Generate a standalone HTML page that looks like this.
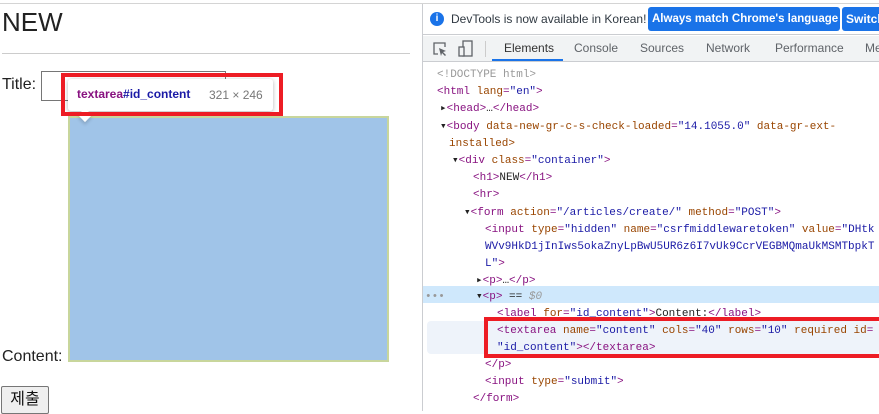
<!DOCTYPE html>
<html><head><meta charset="utf-8"><style>
*{margin:0;padding:0;box-sizing:border-box}
body{width:879px;height:411px;overflow:hidden;background:#fff;position:relative;font-family:"Liberation Sans","Noto Sans CJK KR",sans-serif}
.a{position:absolute;white-space:nowrap}
.m{font-family:"Liberation Mono","DejaVu Sans Mono",monospace;font-size:11px;line-height:17px;color:#881280;margin-top:2px}
.at{color:#994500}.v{color:#1a1aa6}.g{color:#999}.k{color:#222}
.tab{position:absolute;top:41px;font-size:12px;color:#5f6368}
</style></head><body>
<div class="a" style="left:0;top:3px;width:879px;height:1px;background:#d4d4d4"></div>
<div class="a" style="left:2px;top:7px;font-size:26px;color:#222;font-weight:300">NEW</div>
<div class="a" style="left:2px;top:53px;width:408px;height:1px;background:#ccc"></div>
<div class="a" style="left:2px;top:76px;font-size:16px;color:#222">Title:</div>
<div class="a" style="left:41px;top:71px;width:185px;height:30px;border:1px solid #767676"></div>
<div class="a" style="left:68px;top:116px;width:321px;height:246px;background:#c8d69c"></div>
<div class="a" style="left:70px;top:118px;width:317px;height:242px;background:#a0c4e8"></div>
<div class="a" style="left:2px;top:348px;font-size:16px;color:#222">Content:</div>
<div class="a" style="left:1px;top:386px;width:48px;height:28px;border:1px solid #767676;border-radius:2px;background:#efefef;font-size:16px;text-align:center;line-height:26px;color:#111">제출</div>
<div class="a" style="left:68px;top:79px;width:205px;height:32px;background:#fff;box-shadow:0 1px 4px rgba(0,0,0,.3);border-radius:3px"></div>
<div class="a" style="left:80px;top:110px;width:10px;height:10px;background:#fff;transform:rotate(45deg);box-shadow:2px 2px 3px rgba(0,0,0,.15)"></div>
<div class="a" style="left:77px;top:87px;font-size:12px;font-weight:bold"><span style="color:#881280">textarea</span><span style="color:#1a1aa6">#id_content</span></div>
<div class="a" style="left:209px;top:88px;font-size:12px;color:#777">321 × 246</div>
<div class="a" style="left:61px;top:73px;width:222px;height:43px;border:4px solid #ed1c24"></div>
<div class="a" style="left:422px;top:4px;width:1px;height:407px;background:#cbcdd1"></div>
<div class="a" style="left:423px;top:4px;width:456px;height:31px;background:#fff;border-bottom:1px solid #cbcdd1"></div>
<div class="a" style="left:430px;top:12px;width:14px;height:14px;border-radius:50%;background:#1a73e8;color:#fff;font-size:10px;font-weight:bold;text-align:center;line-height:14px">i</div>
<div class="a" style="left:451px;top:12px;font-size:12px;color:#303942">DevTools is now available in Korean!</div>
<div class="a" style="left:648px;top:7px;width:192px;height:24px;background:#1a73e8;border-radius:3px;color:#fff;font-size:11.5px;font-weight:bold;line-height:24px;padding-left:4px;overflow:hidden">Always match Chrome's language</div>
<div class="a" style="left:842px;top:7px;width:40px;height:24px;background:#1a73e8;border-radius:3px;color:#fff;font-size:12px;font-weight:bold;line-height:24px;padding-left:4px">Switch</div>
<div class="a" style="left:423px;top:36px;width:456px;height:26px;background:#f1f3f4;border-bottom:1px solid #cbcdd1"></div>
<svg class="a" style="left:432px;top:41px" width="16" height="16" viewBox="0 0 16 16"><path d="M6 13H2V2h11v4" fill="none" stroke="#5f6368" stroke-width="1.3"/><path d="M7 7l7 3-3 1 3 3-1 1-3-3-1 3z" fill="#5f6368"/></svg>
<svg class="a" style="left:458px;top:40px" width="16" height="18" viewBox="0 0 16 18"><rect x="5" y="1" width="9" height="15" fill="none" stroke="#5f6368" stroke-width="1.3"/><rect x="1" y="7" width="5" height="9" fill="#f1f3f4" stroke="#5f6368" stroke-width="1.3"/></svg>
<div class="a" style="left:485px;top:41px;width:1px;height:16px;background:#ccc"></div>
<div class="tab" style="left:504px;color:#333">Elements</div>
<div class="a" style="left:492px;top:59px;width:71px;height:2px;background:#1a73e8"></div>
<div class="tab" style="left:574px">Console</div>
<div class="tab" style="left:640px">Sources</div>
<div class="tab" style="left:706px">Network</div>
<div class="tab" style="left:775px">Performance</div>
<div class="tab" style="left:865px">Me</div>
<div class="a" style="left:423px;top:286px;width:456px;height:17px;background:#cfe8fc"></div>
<div class="a" style="left:427px;top:321px;width:452px;height:33px;background:#eef3fa;border-radius:4px"></div>
<div class="a m g" style="left:437px;top:65px">&lt;!DOCTYPE html&gt;</div>
<div class="a m" style="left:437px;top:82px">&lt;html <span class="at">lang</span>=<span class="v">"en"</span>&gt;</div>
<div class="a m" style="left:440px;top:99px"><span class="k">▸</span>&lt;head&gt;<span class="k">…</span>&lt;/head&gt;</div>
<div class="a m" style="left:440px;top:117px"><span class="k">▾</span>&lt;body <span class="at">data-new-gr-c-s-check-loaded</span>=<span class="v">"14.1055.0"</span> <span class="at">data-gr-ext-</span></div>
<div class="a m at" style="left:449px;top:134px">installed&gt;</div>
<div class="a m" style="left:452px;top:151px"><span class="k">▾</span>&lt;div <span class="at">class</span>=<span class="v">"container"</span>&gt;</div>
<div class="a m" style="left:473px;top:168px">&lt;h1&gt;<span class="k">NEW</span>&lt;/h1&gt;</div>
<div class="a m" style="left:473px;top:185px">&lt;hr&gt;</div>
<div class="a m" style="left:464px;top:203px"><span class="k">▾</span>&lt;form <span class="at">action</span>=<span class="v">"/articles/create/"</span> <span class="at">method</span>=<span class="v">"POST"</span>&gt;</div>
<div class="a m" style="left:485px;top:220px">&lt;input <span class="at">type</span>=<span class="v">"hidden"</span> <span class="at">name</span>=<span class="v">"csrfmiddlewaretoken"</span> <span class="at">value</span>=<span class="v">"DHtk</span></div>
<div class="a m v" style="left:485px;top:237px">WVv9HkD1jInIws5okaZnyLpBwU5UR6z6I7vUk9CcrVEGBMQmaUkMSMTbpkT</div>
<div class="a m v" style="left:485px;top:254px">L"<span style="color:#881280">&gt;</span></div>
<div class="a m" style="left:476px;top:271px"><span class="k">▸</span>&lt;p&gt;<span class="k">…</span>&lt;/p&gt;</div>
<div class="a m g" style="left:425px;top:287px">•••</div>
<div class="a m" style="left:476px;top:287px"><span class="k">▾</span>&lt;p&gt; <span class="k">==</span> <i class="g">$0</i></div>
<div class="a m" style="left:497px;top:304px">&lt;label <span class="at">for</span>=<span class="v">"id_content"</span>&gt;<span class="k">Content:</span>&lt;/label&gt;</div>
<div class="a m" style="left:497px;top:321px">&lt;textarea <span class="at">name</span>=<span class="v">"content"</span> <span class="at">cols</span>=<span class="v">"40"</span> <span class="at">rows</span>=<span class="v">"10"</span> <span class="at">required</span> <span class="at">id</span>=</div>
<div class="a m" style="left:497px;top:338px"><span class="v">"id_content"</span>&gt;&lt;/textarea&gt;</div>
<div class="a" style="left:484px;top:317px;width:395px;height:41px;border:4px solid #ed1c24;border-right:none"></div>
<div class="a m" style="left:485px;top:355px">&lt;/p&gt;</div>
<div class="a m" style="left:485px;top:372px">&lt;input <span class="at">type</span>=<span class="v">"submit"</span>&gt;</div>
<div class="a m" style="left:473px;top:389px">&lt;/form&gt;</div>
</body></html>
